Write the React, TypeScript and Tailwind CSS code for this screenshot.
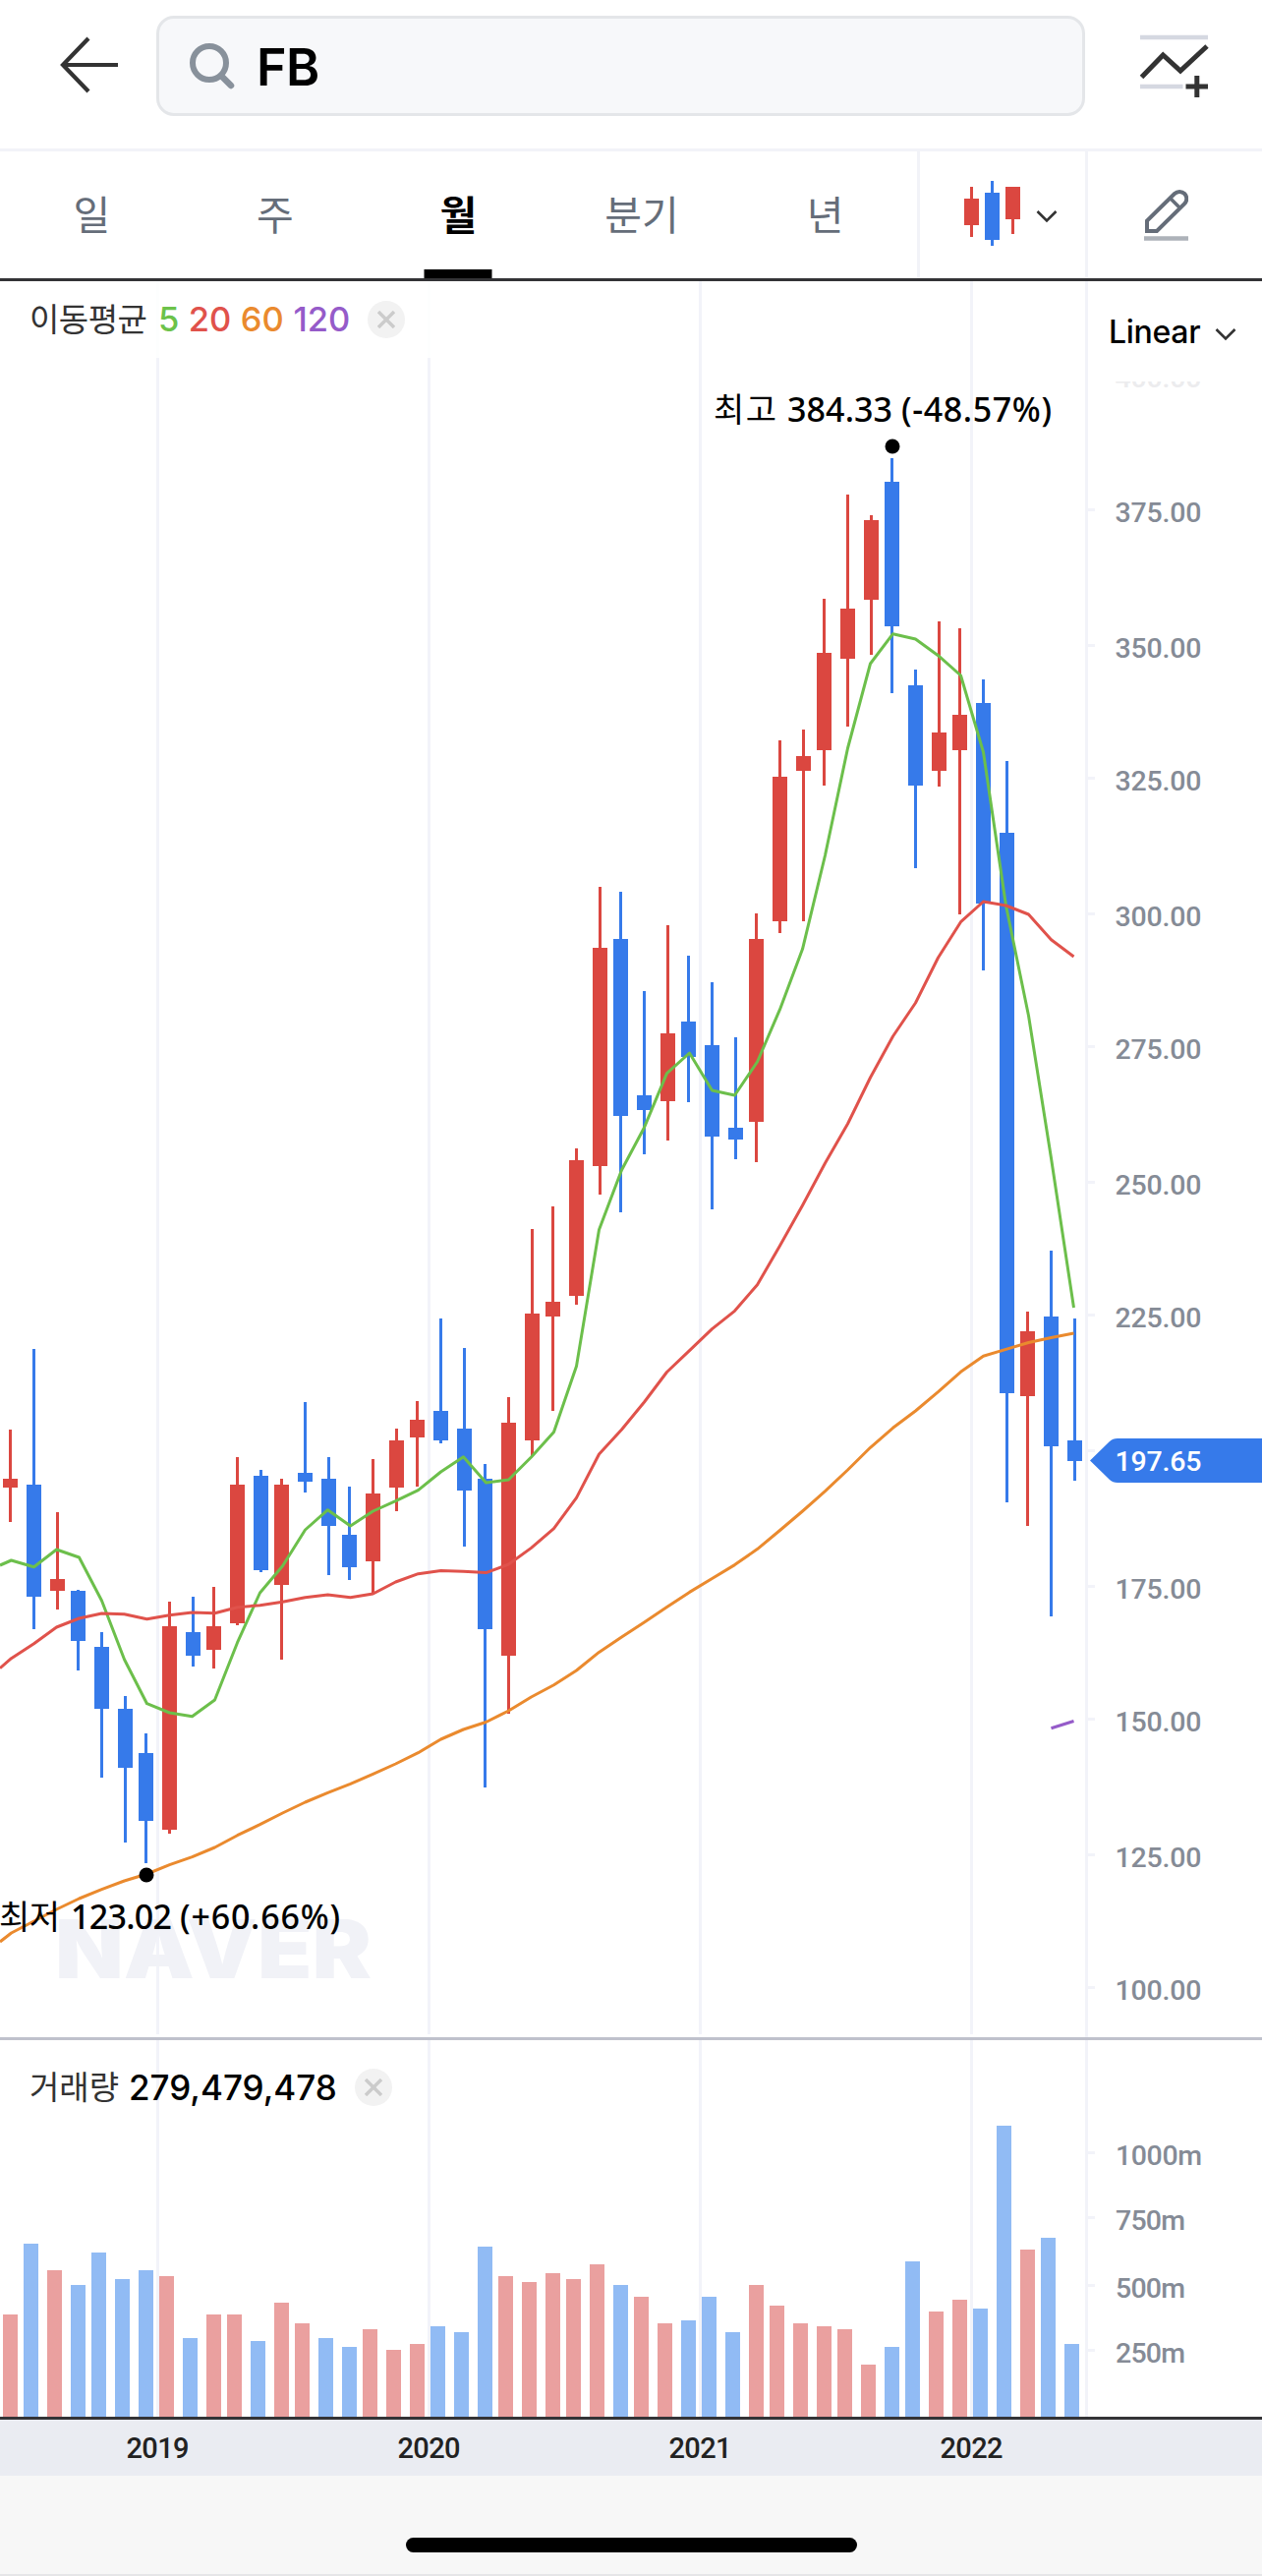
import React, { useState } from 'react';

const RED = '#db4740';
const BLUE = '#367aea';
const GRID = '#f2f3f9';

const PERIODS = ['일', '주', '월', '분기', '년'];

const LEGEND = [
  { label: '5', color: 'text-[#6cc24a]' },
  { label: '20', color: 'text-[#e0524b]' },
  { label: '60', color: 'text-[#ea8a2e]' },
  { label: '120', color: 'text-[#955bc9]' },
];

// [kind, high, bodyTop, bodyBottom, low] in plot units, one per month
const CANDLES: [string, number, number, number, number][] = [
  ['r', 1454, 1504, 1513, 1548],
  ['b', 1372, 1510, 1624, 1657],
  ['r', 1538, 1606, 1618, 1637],
  ['b', 1617, 1618, 1669, 1699],
  ['b', 1660, 1675, 1738, 1808],
  ['b', 1725, 1738, 1798, 1874],
  ['b', 1763, 1783, 1852, 1895],
  ['r', 1629, 1654, 1861, 1865],
  ['b', 1624, 1660, 1684, 1695],
  ['r', 1614, 1654, 1678, 1697],
  ['r', 1482, 1510, 1651, 1653],
  ['b', 1495, 1501, 1597, 1599],
  ['r', 1504, 1510, 1612, 1688],
  ['b', 1426, 1498, 1507, 1518],
  ['b', 1482, 1504, 1552, 1602],
  ['b', 1512, 1561, 1594, 1607],
  ['r', 1484, 1519, 1588, 1621],
  ['r', 1453, 1465, 1513, 1537],
  ['r', 1425, 1444, 1462, 1512],
  ['b', 1341, 1435, 1465, 1468],
  ['b', 1371, 1453, 1516, 1573],
  ['b', 1489, 1504, 1657, 1818],
  ['r', 1421, 1447, 1684, 1743],
  ['r', 1250, 1336, 1465, 1481],
  ['r', 1227, 1324, 1339, 1435],
  ['r', 1168, 1180, 1318, 1327],
  ['r', 902, 964, 1186, 1215],
  ['b', 907, 955, 1135, 1233],
  ['b', 1008, 1114, 1129, 1174],
  ['r', 941, 1051, 1120, 1160],
  ['b', 972, 1039, 1075, 1121],
  ['b', 999, 1063, 1156, 1230],
  ['b', 1055, 1147, 1159, 1179],
  ['r', 929, 955, 1141, 1182],
  ['r', 753, 790, 937, 949],
  ['r', 742, 769, 784, 937],
  ['r', 609, 664, 763, 799],
  ['r', 503, 619, 670, 739],
  ['r', 524, 529, 610, 666],
  ['b', 466, 490, 637, 705],
  ['b', 681, 697, 799, 883],
  ['r', 632, 745, 784, 800],
  ['r', 639, 727, 763, 930],
  ['b', 691, 715, 919, 987],
  ['b', 774, 847, 1417, 1528],
  ['r', 1334, 1354, 1420, 1552],
  ['b', 1272, 1339, 1471, 1644],
  ['b', 1341, 1465, 1486, 1506],
];

const VOLUMES: [string, number][] = [
  ['r', 2354], ['b', 2282], ['r', 2309], ['b', 2324], ['b', 2291], ['b', 2318],
  ['b', 2309], ['r', 2315], ['b', 2378], ['r', 2354], ['r', 2354], ['b', 2381],
  ['r', 2342], ['r', 2363], ['b', 2378], ['b', 2387], ['r', 2369], ['r', 2390],
  ['r', 2384], ['b', 2366], ['b', 2372], ['b', 2285], ['r', 2315], ['r', 2321],
  ['r', 2312], ['r', 2318], ['r', 2303], ['b', 2324], ['r', 2336], ['r', 2363],
  ['b', 2360], ['b', 2336], ['b', 2372], ['r', 2324], ['r', 2345], ['r', 2363],
  ['r', 2366], ['r', 2369], ['r', 2405], ['b', 2387], ['b', 2300], ['r', 2351],
  ['r', 2339], ['b', 2348], ['b', 2162], ['r', 2288], ['b', 2276], ['b', 2384],
];

const MA5 = [
  1587, 1593.7, 1576, 1584, 1628, 1687.7, 1732.7, 1742, 1745.7, 1729, 1670.7, 1620,
  1592.7, 1556, 1535.7, 1552, 1537, 1526.7, 1515.7, 1497, 1481.8, 1508, 1505, 1482,
  1456.5, 1389.6, 1250.7, 1190, 1146.7, 1091.7, 1071, 1109, 1114, 1080, 1026.7, 965.3,
  870, 761, 675, 644.7, 650, 666.7, 687, 765, 921, 1033, 1178, 1330,
];

const MA20 = [
  1686.7, 1671.7, 1655, 1646, 1641, 1641.7, 1646.7, 1642.7, 1640, 1640.7, 1634.7, 1632.7,
  1629.3, 1624.7, 1622, 1624.7, 1621, 1609, 1600.7, 1597.5, 1598.3, 1599.6, 1591, 1574.4,
  1554.6, 1523.4, 1479, 1454, 1426, 1395.5, 1373.6, 1351.7, 1333.3, 1306.7, 1267, 1226,
  1183, 1143, 1096, 1054, 1020, 974, 937.7, 917, 921, 930, 955.7, 973,
];

const MA60 = [
  1966, 1954, 1942, 1931, 1921.7, 1913, 1906, 1896.7, 1888.7, 1879, 1866.7, 1855.7,
  1844, 1833, 1823.3, 1814.3, 1804.3, 1794, 1782.7, 1769, 1759, 1751.5, 1740, 1726,
  1713.7, 1699, 1680.4, 1665, 1650, 1634.5, 1619.4, 1605.5, 1591.6, 1575.6, 1556.5, 1537,
  1516.7, 1495, 1472.3, 1452.3, 1435, 1415.7, 1395.3, 1379.3, 1372.4, 1365.5, 1360.5, 1356,
];

const YEARS = [
  { label: '2019', x: 160.5 },
  { label: '2020', x: 436.5 },
  { label: '2021', x: 712.5 },
  { label: '2022', x: 988.5 },
];

const PRICE_TICKS = [
  { label: '375.00', y: 518.5 },
  { label: '350.00', y: 656.5 },
  { label: '325.00', y: 791.5 },
  { label: '300.00', y: 929.5 },
  { label: '275.00', y: 1064.5 },
  { label: '250.00', y: 1202.5 },
  { label: '225.00', y: 1337.5 },
  { label: '', y: 1475.5 },
  { label: '175.00', y: 1613.5 },
  { label: '150.00', y: 1748.5 },
  { label: '125.00', y: 1886.5 },
  { label: '100.00', y: 2021.5 },
];

const VOLUME_TICKS = [
  { label: '1000m', y: 2189.5, width: 87 },
  { label: '750m', y: 2255.5, width: 70 },
  { label: '500m', y: 2324.5, width: 70 },
  { label: '250m', y: 2390.5, width: 70 },
];

// candles and bars snap to the 3px device grid, lines do not
const candleX = (i: number) => 3 + 3 * Math.ceil((23 * i) / 3);
const volumeX = (i: number) => 3 + 3 * Math.floor((23 * i) / 3);
const toPoints = (start: number, values: number[]) =>
  [`0,${start}`, ...values.map((y, i) => `${11.5 + 23 * i},${y}`)].join(' ');

const ChevronIcon = () => (
  <svg width="22" height="14" viewBox="0 0 22 14" fill="none">
    <path d="M1.5 2 L11 11.5 L20.5 2" stroke="#333" strokeWidth="2.6" />
  </svg>
);

const CloseButton = () => (
  <button className="flex items-center justify-center w-[38px] h-[38px] rounded-full bg-[#f2f2f2]">
    <svg width="18" height="18" viewBox="0 0 18 18" fill="none">
      <path d="M1 1 L17 17 M17 1 L1 17" stroke="#cbcbcb" strokeWidth="3.4" />
    </svg>
  </button>
);

const SearchHeader = () => (
  <header className="flex items-center h-[154px] pb-[17px] border-b-[3px] border-[#f2f3f8]">
    <button className="w-[159px] pl-[60px] pb-[2px]">
      <svg width="62" height="60" viewBox="0 0 62 60" fill="none">
        <path d="M30 3 L4 30 L30 57 M4 30 H60" stroke="#333" strokeWidth="4.2" />
      </svg>
    </button>
    <div className="flex items-center w-[945px] h-[102px] rounded-[18px] border-[3px] border-[#e4e6e9] bg-[#f7f8fa]">
      <svg className="ml-[29px]" width="50" height="50" viewBox="0 0 50 50" fill="none">
        <circle cx="22" cy="22" r="17" stroke="#88919b" strokeWidth="6" />
        <path d="M34 35 L44 45" stroke="#88919b" strokeWidth="6.5" strokeLinecap="round" />
      </svg>
      <span className="ml-[20px] pt-1 text-[52px] leading-none font-semibold text-black tracking-[-0.5px]">FB</span>
    </div>
    <button className="ml-[54px]">
      <svg width="74" height="66" viewBox="0 0 74 66" fill="none">
        <path d="M2 4 H71 M2 54 H45.5" stroke="#d5d8e1" strokeWidth="4.5" />
        <path d="M3.5 44.5 L25.3 22 L43 38 L70 13" stroke="#333" strokeWidth="5" />
        <path d="M48.5 54 H71 M59.8 43 V65" stroke="#333" strokeWidth="5" />
      </svg>
    </button>
  </header>
);

const PeriodTabs = () => {
  const [active, setActive] = useState('월');

  return (
    <nav className="flex h-[132px] border-b-[3px] border-[#333336] text-[41px]">
      <div className="flex w-[933px]">
        {PERIODS.map((period) => (
          <button
            key={period}
            onClick={() => setActive(period)}
            className={`relative flex-1 pt-[2px] ${
              active === period ? 'font-bold text-black' : 'font-normal text-[#656d79]'
            }`}
          >
            {period}
            {active === period && (
              <span className="absolute bottom-0 left-1/2 -translate-x-1/2 w-[69px] h-[9px] bg-black"></span>
            )}
          </button>
        ))}
      </div>
      <button className="flex items-center w-[171px] pl-[45px] gap-[16px] border-l-[3px] border-[#f2f3f8]">
        <svg className="mb-[3px]" width="57" height="66" viewBox="0 0 57 66">
          <path d="M0 18 h15 v27 h-15 z M6 6 h3 v51 h-3 z M42 6 h15 v33 h-15 z M48 39 h3 v15 h-3 z" fill={RED} />
          <path d="M21 12 h15 v48 h-15 z M27 0 h3 v66 h-3 z" fill={BLUE} />
        </svg>
        <span className="pt-[3px]">
          <ChevronIcon />
        </span>
      </button>
      <button className="flex items-center w-[180px] pl-[57px] pb-[2px] border-l-[3px] border-[#f2f3f8]">
        <svg width="45" height="54" viewBox="0 0 45 54" fill="none">
          <path d="M3 44 V33.5 L31 6 a7.2 7.2 0 0 1 10.2 10.2 L13 44 Z" stroke="#656d79" strokeWidth="4" />
          <path d="M26.5 10.5 L36.5 20.5" stroke="#656d79" strokeWidth="3.5" />
          <path d="M0 51.5 H45" stroke="#adb2b9" strokeWidth="4.5" />
        </svg>
      </button>
    </nav>
  );
};

const PricePane = () => (
  <section className="relative flex h-[1789px] border-b-[3px] border-[#bfc1cc]">
    <svg width="1104" height="1786" viewBox="0 286 1104 1786">
      {YEARS.map((year) => (
        <rect key={year.label} x={year.x - 1.5} y="286" width="3" height="1783" fill={GRID} />
      ))}
      {/* legend backdrop fades the grid behind it */}
      <rect x="0" y="286" width="450" height="78" fill="#fff" fillOpacity="0.85" />
      <text
        x="56" y="2012" textLength="322" lengthAdjust="spacingAndGlyphs" fill="#f1f2f7"
        className="text-[82px] font-black"
      >
        NAVER
      </text>

      {CANDLES.map(([kind, high, top, bottom, low], i) => (
        <g key={i} fill={kind === 'r' ? RED : BLUE}>
          <rect x={candleX(i) + 6} y={high} width="3" height={low - high} />
          <rect x={candleX(i)} y={top} width="15" height={bottom - top} />
        </g>
      ))}

      <g fill="none" strokeWidth="3" strokeLinejoin="round">
        <polyline points={toPoints(1592, MA5)} stroke="#6cbf4b" />
        <polyline points={toPoints(1696.7, MA20)} stroke="#e0524b" />
        <polyline points={toPoints(1975, MA60)} stroke="#ea8a2e" />
        <polyline points="1069.5,1757.8 1092.5,1750.5" stroke="#955bc9" />
      </g>

      <circle cx="908" cy="454" r="7.5" fill="#000" />
      <circle cx="149" cy="1907" r="7.5" fill="#000" />
      <g fill="#000" className="font-['Noto_Sans','Noto_Sans_CJK_KR',sans-serif] text-[34px] font-medium">
        <text x="726" y="429" textLength="64" className="font-normal">최고</text>
        <text x="801" y="429" textLength="107">384.33</text>
        <text x="917" y="429" textLength="153">(-48.57%)</text>
        <text x="-1" y="1962" textLength="62" className="font-normal">최저</text>
        <text x="72" y="1962" textLength="103">123.02</text>
        <text x="183" y="1962" textLength="163">(+60.66%)</text>
      </g>
    </svg>

    <svg width="180" height="1786" viewBox="1104 286 180 1786">
      <defs>
        <clipPath id="fadedTick">
          <rect x="1104" y="388" width="180" height="12" />
        </clipPath>
      </defs>
      <rect x="1104" y="286" width="3" height="1786" fill={GRID} />
      <g className="font-[Roboto,sans-serif] text-[28.5px] font-medium">
        <text x="1134.5" y="394" textLength="88" fill="#ececee" clipPath="url(#fadedTick)">400.00</text>
        {PRICE_TICKS.map((tick) => (
          <g key={tick.y}>
            <rect x="1107" y={tick.y - 1.5} width="7" height="3" fill={GRID} />
            {tick.label && (
              <text x="1134.5" y={tick.y + 12.2} textLength="88" fill="#858b96">{tick.label}</text>
            )}
          </g>
        ))}
        <path d="M1109 1485.5 L1129 1466 Q1132 1463 1137 1463 H1284 V1508 H1137 Q1132 1508 1129 1505 Z" fill={BLUE} />
        <text x="1134.5" y="1495.6" textLength="88" fill="#fff">197.65</text>
      </g>
    </svg>

    <div className="absolute left-[30px] top-[20px] flex items-center h-[38px] text-[34.5px] leading-none">
      <span className="w-[131px] text-[33px] tracking-[-0.5px] text-[#333]">이동평균</span>
      <span className="flex gap-[9.5px] font-medium">
        {LEGEND.map((item) => (
          <span key={item.label} className={item.color}>{item.label}</span>
        ))}
      </span>
      <span className="ml-[18px]">
        <CloseButton />
      </span>
    </div>

    <button className="absolute left-[1128px] top-[28px] flex items-center gap-[15px] text-[32px] font-medium text-black tracking-[-0.3px]">
      Linear
      <span className="pt-1">
        <ChevronIcon />
      </span>
    </button>
  </section>
);

const VolumePane = () => (
  <section className="relative flex h-[386px] border-b-[3px] border-[#333336]">
    <svg width="1104" height="383" viewBox="0 2075 1104 383">
      {YEARS.map((year) => (
        <rect key={year.label} x={year.x - 1.5} y="2075" width="3" height="383" fill={GRID} />
      ))}
      {VOLUMES.map(([kind, top], i) => (
        <rect key={i} x={volumeX(i)} y={top} width="15" height={2458 - top} fill={kind === 'r' ? '#eaa09f' : '#91bbf4'} />
      ))}
    </svg>
    <svg width="180" height="383" viewBox="1104 2075 180 383">
      <rect x="1104" y="2075" width="3" height="383" fill={GRID} />
      {VOLUME_TICKS.map((tick) => (
        <g key={tick.label} className="font-[Roboto,sans-serif] text-[28.5px] font-medium">
          <rect x="1107" y={tick.y - 1.5} width="7" height="3" fill={GRID} />
          <text x="1135" y={tick.y + 12.5} textLength={tick.width + 1} fill="#858b96">{tick.label}</text>
        </g>
      ))}
    </svg>

    <div className="absolute left-[30px] top-[29px] flex items-center h-[38px] text-[35px] leading-none">
      <span className="w-[101px] text-[33px] text-[#333]">거래량</span>
      <span className="w-[212px] text-black font-medium">279,479,478</span>
      <span className="ml-[18px]">
        <CloseButton />
      </span>
    </div>
  </section>
);

const TimeAxis = () => (
  <svg className="block bg-[#eaecf2]" width="1284" height="57" viewBox="0 2461 1284 57">
    {YEARS.map((year) => (
      <text
        key={year.label} x={year.x - 32} y="2500" textLength="64" fill="#222"
        className="font-[Roboto,sans-serif] text-[29px] font-medium"
      >
        {year.label}
      </text>
    ))}
  </svg>
);

export default function App() {
  return (
    <div className="w-[1284px] h-[2620px] overflow-hidden bg-white font-['Inter','Noto_Sans_CJK_KR',sans-serif]">
      <SearchHeader />
      <PeriodTabs />
      <PricePane />
      <VolumePane />
      <TimeAxis />
      <footer className="h-[102px] pt-[63px] bg-[#f7f7f7] border-b-2 border-[#e6e6e8]">
        <div className="mx-auto w-[459px] h-[15px] rounded-full bg-black"></div>
      </footer>
    </div>
  );
}
